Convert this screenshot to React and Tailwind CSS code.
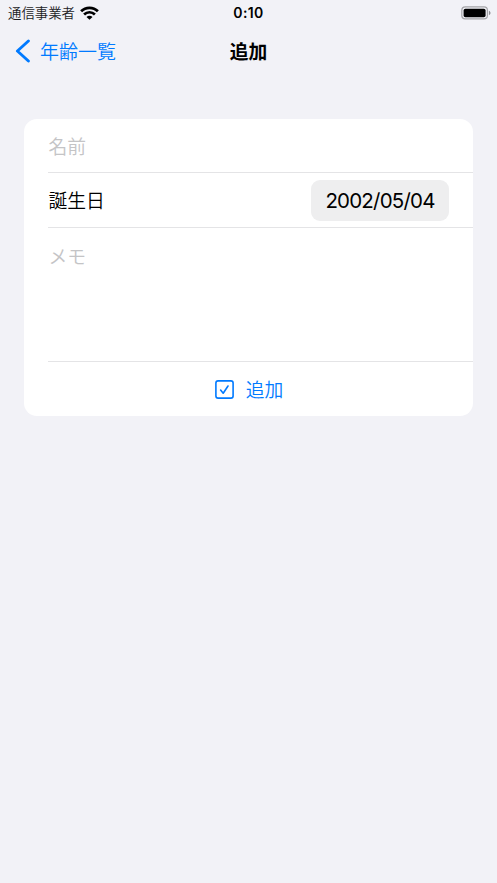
const jp = "font-['Inter','Noto_Sans_CJK_JP',sans-serif]";

function StatusBar() {
  return (
    <div className="grid h-[26px] grid-cols-3 items-center pl-2 pr-[6px] text-black">
      <div className="flex items-center gap-[5px]">
        <span className="whitespace-nowrap text-[13.4px] leading-5 font-[350] text-[#1c1c1e]">通信事業者</span>
        <svg className="mb-px" width="19" height="14" viewBox="0 0 19 14" fill="none" stroke="currentColor">
          <path d="M1.1 5.3C5.7 0.6 13.3 0.6 17.9 5.3" strokeWidth="2.7" />
          <path d="M4.1 8.5C7.1 5.5 11.9 5.5 14.9 8.5" strokeWidth="2.7" />
          <path d="M9.5 13.8L6.5 10.9C8.2 9.3 10.8 9.3 12.5 10.9Z" fill="currentColor" stroke="none" />
        </svg>
      </div>
      <span className="pr-[2px] text-center text-[14px] leading-5 font-semibold tracking-[0.4px]">0:10</span>
      <svg className="justify-self-end" width="30" height="14" viewBox="0 0 30 14">
        <rect x="0.8" y="0.9" width="25.6" height="12" rx="3.4" fill="none" stroke="#a4a4a8" strokeWidth="1.2" />
        <rect x="2.6" y="2.7" width="22" height="8.5" rx="1.8" fill="#000" />
        <path d="M27.9 4.8C30 5.5 30 8.5 27.9 9.2Z" fill="#8e8e92" />
      </svg>
    </div>
  );
}

function NavBar() {
  return (
    <header className="grid h-[49px] grid-cols-3 items-center px-[15px]">
      <button className="flex items-center gap-[9px] text-[#007aff]">
        <svg width="16" height="24" viewBox="0 0 16 24" fill="none" stroke="currentColor" strokeWidth="2.9" strokeLinecap="round" strokeLinejoin="round">
          <path d="M13.4 2L2.4 12L13.4 22" />
        </svg>
        <span className="whitespace-nowrap pt-1 text-[19px] leading-7 font-[350]">年齢一覧</span>
      </button>
      <h1 className="pt-1 text-center text-[18.8px] leading-7 font-bold text-black">追加</h1>
    </header>
  );
}

export default function App() {
  return (
    <div className={`min-h-screen bg-[#f2f2f7] text-[18.8px] leading-7 font-[350] ${jp}`}>
      <StatusBar />
      <NavBar />
      <main className="mx-6 mt-11 h-[297px] overflow-hidden rounded-[13px] bg-white pl-6">
        <div className="flex h-[54px] items-center border-b border-[#e4e4e6] pt-[5px] pl-[0.5px] text-[#c4c4c6]">名前</div>
        <div className="flex h-[55px] items-center justify-between border-b border-[#e4e4e6] pr-6 pl-[0.5px] text-black">
          <span className="pt-1">誕生日</span>
          <span className="flex h-[41px] w-[138px] items-center justify-center rounded-[9px] bg-[#eeeeef] pt-[2px] text-[20.5px] font-normal tracking-[-0.8px]">2002/05/04</span>
        </div>
        <div className="h-[134px] border-b border-[#e4e4e6] pt-4 pl-[0.5px] text-[#c4c4c6]">メモ</div>
        <button className="flex h-[54px] w-full items-center justify-center gap-3 pr-[23px] text-[#007aff]">
          <svg width="19" height="19" viewBox="0 0 19 19" fill="none" stroke="currentColor" strokeWidth="1.6" strokeLinecap="round" strokeLinejoin="round">
            <rect x="0.9" y="0.9" width="17.2" height="17.2" rx="2.2" />
            <path d="M5.6 10.1L8.2 13.2L13 6" />
          </svg>
          <span className="pt-[3px]">追加</span>
        </button>
      </main>
    </div>
  );
}
